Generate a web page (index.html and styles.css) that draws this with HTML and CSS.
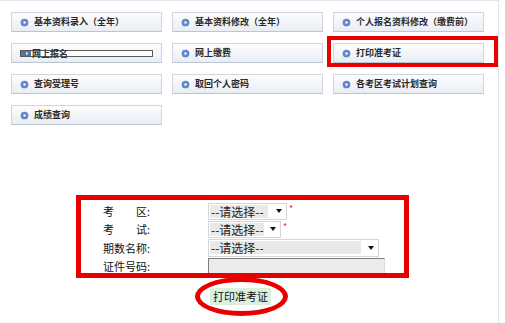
FILE: index.html
```html
<!DOCTYPE html>
<html lang="zh-CN">
<head>
<meta charset="utf-8">
<title>打印准考证</title>
<link rel="stylesheet" href="styles.css">
</head>
<body>
<div class="page">
  <div class="menu">
    <a class="btn"><svg class="ico" viewBox="0 0 10 10"><circle cx="5" cy="5" r="4.3" fill="#5e89c6"/><path d="M4 3 L7 5 L4 7 Z" fill="#fff"/></svg><span>基本资料录入（全年）</span></a>
    <a class="btn"><svg class="ico" viewBox="0 0 10 10"><circle cx="5" cy="5" r="4.3" fill="#5e89c6"/><path d="M4 3 L7 5 L4 7 Z" fill="#fff"/></svg><span>基本资料修改（全年）</span></a>
    <a class="btn"><svg class="ico" viewBox="0 0 10 10"><circle cx="5" cy="5" r="4.3" fill="#5e89c6"/><path d="M4 3 L7 5 L4 7 Z" fill="#fff"/></svg><span>个人报名资料修改（缴费前）</span></a>

    <a class="btn"><span class="fake"><span class="sq"><svg viewBox="0 0 10 5"><path d="M5 0.8 L7.5 2.5 L5 4.2 Z" fill="#dfe8f5"/></svg></span><span class="ft">网上报名</span></span></a>
    <a class="btn"><svg class="ico" viewBox="0 0 10 10"><circle cx="5" cy="5" r="4.3" fill="#5e89c6"/><path d="M4 3 L7 5 L4 7 Z" fill="#fff"/></svg><span>网上缴费</span></a>
    <a class="btn"><svg class="ico" viewBox="0 0 10 10"><circle cx="5" cy="5" r="4.3" fill="#5e89c6"/><path d="M4 3 L7 5 L4 7 Z" fill="#fff"/></svg><span>打印准考证</span></a>

    <a class="btn"><svg class="ico" viewBox="0 0 10 10"><circle cx="5" cy="5" r="4.3" fill="#5e89c6"/><path d="M4 3 L7 5 L4 7 Z" fill="#fff"/></svg><span>查询受理号</span></a>
    <a class="btn"><svg class="ico" viewBox="0 0 10 10"><circle cx="5" cy="5" r="4.3" fill="#5e89c6"/><path d="M4 3 L7 5 L4 7 Z" fill="#fff"/></svg><span>取回个人密码</span></a>
    <a class="btn"><svg class="ico" viewBox="0 0 10 10"><circle cx="5" cy="5" r="4.3" fill="#5e89c6"/><path d="M4 3 L7 5 L4 7 Z" fill="#fff"/></svg><span>各考区考试计划查询</span></a>

    <a class="btn"><svg class="ico" viewBox="0 0 10 10"><circle cx="5" cy="5" r="4.3" fill="#5e89c6"/><path d="M4 3 L7 5 L4 7 Z" fill="#fff"/></svg><span>成绩查询</span></a>
  </div>

  <div class="form">
    <div class="row">
      <span class="lbl">考　　区:</span>
      <div class="sel w1"><span class="val">--请选择--</span><span class="arr"></span></div>
      <span class="req">*</span>
    </div>
    <div class="row">
      <span class="lbl">考　　试:</span>
      <div class="sel w2"><span class="val">--请选择--</span><span class="arr"></span></div>
      <span class="req">*</span>
    </div>
    <div class="row">
      <span class="lbl">期数名称:</span>
      <div class="sel w3"><span class="val">--请选择--</span><span class="arr"></span></div>
    </div>
    <div class="row">
      <span class="lbl">证件号码:</span>
      <div class="inp"></div>
    </div>
  </div>

  <div class="submit"><button class="go">打印准考证</button></div>

  <div class="mark mark1"></div>
  <div class="mark mark2"></div>
  <div class="mark mark3"></div>
</div>
</body>
</html>
```

FILE: styles.css
```css
html, body {
  margin: 0;
  padding: 0;
  background: #fff;
}
body {
  font-family: "Noto Sans CJK SC", "Noto Sans", sans-serif;
  color: #222;
}
.page {
  position: relative;
  width: 498px;
  height: 322px;
  border-top: 1px solid #e2e6ea;
  border-right: 1px solid #e2e6ea;
}
.menu {
  display: grid;
  grid-template-columns: repeat(3, 151px);
  grid-auto-rows: 20px;
  column-gap: 10px;
  row-gap: 11px;
  padding: 11px 0 0 11px;
}
.btn {
  box-sizing: border-box;
  display: flex;
  align-items: center;
  border: 1px solid #cfd6e0;
  border-bottom-color: #bcc5d2;
  background: linear-gradient(#fdfdfe, #e9edf4);
  padding-left: 8px;
  font-size: 9px;
  font-weight: bold;
  color: #2a2a2a;
  white-space: nowrap;
  line-height: 10px;
}
.ico {
  width: 9px;
  height: 9px;
  margin-right: 5px;
  flex: none;
}
.fake {
  box-sizing: border-box;
  display: flex;
  align-items: center;
  width: 133px;
  height: 7px;
  border: 1px solid #5a5a5a;
  background: #fff;
}
.sq {
  display: block;
  width: 10px;
  height: 5px;
  background: #4f74ad;
  flex: none;
}
.sq svg {
  display: block;
  width: 10px;
  height: 5px;
}
.ft {
  line-height: 5px;
  margin-left: 1px;
  color: #333;
}
.form {
  margin: 77px 0 0 103px;
  display: grid;
  grid-template-rows: 18px 18px 19px 17px;
}
.row {
  display: flex;
  align-items: center;
  font-size: 11px;
  color: #111;
  white-space: nowrap;
}
.lbl {
  width: 105px;
  flex: none;
  line-height: 12px;
}
.sel {
  box-sizing: border-box;
  height: 17px;
  display: flex;
  align-items: center;
  border: 1px solid #d6d6d6;
  background: #fff;
  overflow: hidden;
}
.w1 { width: 79px; }
.w2 { width: 73px; }
.w3 { width: 171px; height: 18px; }
.val {
  flex: none;
  margin-left: 1px;
  height: 13px;
  line-height: 13px;
  background: #e9e9e9;
  font-size: 12px;
  padding: 0 2px 0 1px;
  color: #222;
  white-space: nowrap;
}
.w1 .val { min-width: 55px; }
.w2 .val { min-width: 50px; padding-right: 0; }
.w3 .val { min-width: 148px; }
.arr {
  flex: none;
  margin-left: auto;
  margin-right: 4px;
  width: 0;
  height: 0;
  border-left: 3.5px solid transparent;
  border-right: 3.5px solid transparent;
  border-top: 4px solid #111;
}
.req {
  color: #e2333a;
  font-size: 9px;
  line-height: 9px;
  align-self: flex-start;
  margin: 2px 0 0 2px;
}
.inp {
  box-sizing: border-box;
  width: 177px;
  height: 16px;
  background: #ebebeb;
  border: 1px solid;
  border-color: #7d7d7d #dcdcdc #dcdcdc #7d7d7d;
}
.submit {
  margin: 14px 0 0 210px;
}
.go {
  display: block;
  box-sizing: border-box;
  width: 61px;
  height: 17px;
  padding: 0;
  border: none;
  background: #dcefdf;
  font-family: "Noto Sans CJK SC", "Noto Sans", sans-serif;
  font-size: 11px;
  line-height: 17px;
  color: #111;
}
.mark {
  position: absolute;
  box-sizing: border-box;
  border: 5px solid #e80000;
}
.mark1 {
  left: 327px;
  top: 35px;
  width: 171px;
  height: 31px;
  border-width: 4px;
}
.mark2 {
  left: 76px;
  top: 194px;
  width: 333px;
  height: 83px;
}
.mark3 {
  left: 195px;
  top: 276px;
  width: 93px;
  height: 39px;
  border-radius: 50%;
}
```
